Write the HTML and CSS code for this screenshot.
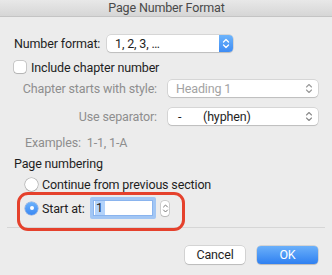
FILE: index.html
```html
<!DOCTYPE html>
<html>
<head>
<meta charset="utf-8">
<link rel="stylesheet" href="styles.css">
</head>
<body>
<div class="window">
  <div class="titlebar">Page Number Format</div>
  <div class="content">
    <div class="row fmt-row">
      <span class="label fmt-label">Number format:</span>
      <div class="popup popup-fmt">
        <span class="popup-text">1, 2, 3, …</span>
        <span class="stepper-blue">
          <svg width="8" height="11" viewBox="0 0 8 11"><path d="M1.5 4 L4 1.5 L6.5 4 M1.5 7 L4 9.5 L6.5 7" fill="none" stroke="#fff" stroke-width="1.3" stroke-linecap="round" stroke-linejoin="round"/></svg>
        </span>
      </div>
    </div>
    <div class="row check-row">
      <span class="checkbox"></span>
      <span class="label">Include chapter number</span>
    </div>
    <div class="chapter-grid">
      <span class="label dim right">Chapter starts with style:</span>
      <div class="popup popup-wide disabled">
        <span class="popup-text">Heading 1</span>
        <svg class="chev" width="8" height="11" viewBox="0 0 8 11"><path d="M1.5 4 L4 1.5 L6.5 4 M1.5 7 L4 9.5 L6.5 7" fill="none" stroke="#9a9a9a" stroke-width="1.1" stroke-linecap="round" stroke-linejoin="round"/></svg>
      </div>
      <span class="label dim right">Use separator:</span>
      <div class="popup popup-wide">
        <span class="popup-text"><span class="dash">-</span>(hyphen)</span>
        <svg class="chev" width="8" height="11" viewBox="0 0 8 11"><path d="M1.5 4 L4 1.5 L6.5 4 M1.5 7 L4 9.5 L6.5 7" fill="none" stroke="#8a8a8a" stroke-width="1.1" stroke-linecap="round" stroke-linejoin="round"/></svg>
      </div>
    </div>
    <div class="row examples label dim">Examples:&nbsp; 1-1, 1-A</div>
    <div class="row section label">Page numbering</div>
    <div class="row radio-row">
      <span class="radio"></span>
      <span class="label">Continue from previous section</span>
    </div>
    <div class="highlight">
      <div class="row start-row">
        <span class="radio on"></span>
        <span class="label start-label">Start at:</span>
        <div class="textfield"><span class="sel">1</span></div>
        <span class="small-stepper">
          <svg width="7" height="13" viewBox="0 0 7 13"><path d="M1.5 5 L3.5 3 L5.5 5 M1.5 8 L3.5 10 L5.5 8" fill="none" stroke="#777" stroke-width="1" stroke-linecap="round" stroke-linejoin="round"/></svg>
        </span>
      </div>
    </div>
  </div>
  <div class="separator"></div>
  <div class="buttons">
    <button class="btn">Cancel</button>
    <button class="btn primary">OK</button>
  </div>
</div>
</body>
</html>
```

FILE: styles.css
```css
html, body {
  margin: 0;
  padding: 0;
}
body {
  width: 332px;
  height: 275px;
  overflow: hidden;
  background: #ececec;
  font-family: "Roboto", "Liberation Sans", sans-serif;
  font-size: 12.5px;
  letter-spacing: -0.15px;
  color: #1e1e1e;
}
.window {
  width: 332px;
  height: 275px;
  background: #ececec;
}
.titlebar {
  height: 16px;
  line-height: 16px;
  text-align: center;
  color: #4a4a4a;
  background: linear-gradient(#e8e8e8, #d6d6d6);
  border-bottom: 1px solid #c4c4c4;
  padding-left: 1px;
}
.content {
  padding: 0 0 0 14px;
}
.row {
  display: flex;
  align-items: center;
}
.label {
  white-space: nowrap;
}
.dim {
  color: #8e8e8e;
}
.right {
  text-align: right;
}
.fmt-row {
  margin-top: 18px;
  height: 17px;
}
.fmt-label {
  width: 93px;
}
.popup {
  display: flex;
  align-items: center;
  height: 17px;
  background: #fff;
  border-radius: 4px;
  box-shadow: 0 0 0 0.5px rgba(0,0,0,0.18), 0 1px 1px rgba(0,0,0,0.12);
  box-sizing: border-box;
}
.popup-fmt {
  width: 126px;
}
.popup-text {
  flex: 1;
  padding-left: 8px;
  white-space: nowrap;
}
.stepper-blue {
  width: 14px;
  height: 17px;
  border-radius: 0 4px 4px 0;
  background: linear-gradient(#6db4fb, #3e8cf4);
  display: flex;
  align-items: center;
  justify-content: center;
}
.check-row {
  margin-top: 8px;
  height: 14px;
  gap: 5px;
}
.checkbox {
  width: 12px;
  height: 12px;
  background: #fff;
  border-radius: 3px;
  box-shadow: 0 0 0 0.5px rgba(0,0,0,0.3), 0 1px 1px rgba(0,0,0,0.1);
}
.chapter-grid {
  display: grid;
  grid-template-columns: 143px 150px;
  grid-auto-rows: 18px;
  column-gap: 11px;
  row-gap: 10px;
  margin-top: 5px;
  align-items: center;
}
.popup-wide {
  width: 150px;
  height: 17px;
}
.disabled .popup-text {
  color: #a3a3a3;
}
.chev {
  margin-right: 5px;
}
.dash {
  display: inline-block;
  width: 25px;
  padding-left: 2px;
}
.examples {
  margin-top: 9px;
  padding-left: 11px;
  height: 16px;
}
.section {
  margin-top: 5px;
  height: 16px;
}
.radio-row {
  margin-top: 5px;
  padding-left: 11px;
  height: 16px;
  gap: 4px;
}
.radio {
  flex: none;
  width: 13px;
  height: 13px;
  border-radius: 50%;
  background: #fff;
  box-shadow: 0 0 0 0.5px rgba(0,0,0,0.3), 0 1px 1px rgba(0,0,0,0.1);
  box-sizing: border-box;
  position: relative;
}
.radio.on {
  background: linear-gradient(#6cb2fb, #3a88f3);
  box-shadow: 0 0 0 0.5px rgba(30,90,200,0.5);
}
.radio.on::after {
  content: "";
  position: absolute;
  left: 4.5px;
  top: 4.5px;
  width: 4px;
  height: 4px;
  border-radius: 50%;
  background: #fff;
}
.highlight {
  margin-left: 3px;
  width: 168px;
  height: 39px;
  box-sizing: border-box;
  border: 3px solid #e5412c;
  border-radius: 11px;
  padding: 2px 0 0 5px;
  position: relative;
  z-index: 1;
}
.start-row {
  height: 22px;
  gap: 4px;
}
.start-label {
  width: 44px;
}
.textfield {
  width: 66px;
  height: 22px;
  box-sizing: border-box;
  background: #fff;
  border: 3px solid #a2c6f4;
  box-shadow: inset 0 0 0 1px #8ab4ee;
  display: flex;
  align-items: center;
  padding-left: 2px;
  border-radius: 2px;
}
.sel {
  background: #b3d3fb;
  padding: 0 2px 0 1px;
  line-height: 14px;
}
.small-stepper {
  width: 8px;
  height: 15px;
  margin-left: 1px;
  background: #fff;
  border-radius: 3px;
  box-shadow: 0 0 0 0.5px rgba(0,0,0,0.25), 0 1px 1px rgba(0,0,0,0.1);
  display: flex;
  align-items: center;
  justify-content: center;
}
.separator {
  margin: -4px 7px 0;
  height: 1px;
  background: #d6d6d6;
}
.buttons {
  display: flex;
  justify-content: flex-end;
  gap: 12px;
  padding: 18px 14px 0 0;
}
.btn {
  font-family: inherit;
  font-size: 12.5px;
  letter-spacing: -0.15px;
  width: 60px;
  height: 18px;
  padding: 0;
  border: none;
  border-radius: 4px;
  background: #fff;
  color: #1e1e1e;
  box-shadow: 0 0 0 0.5px rgba(0,0,0,0.2), 0 1px 1px rgba(0,0,0,0.12);
  line-height: 18px;
}
.btn.primary {
  width: 61px;
  background: linear-gradient(#6bb0fa, #2f80f1);
  color: #fff;
}
```
